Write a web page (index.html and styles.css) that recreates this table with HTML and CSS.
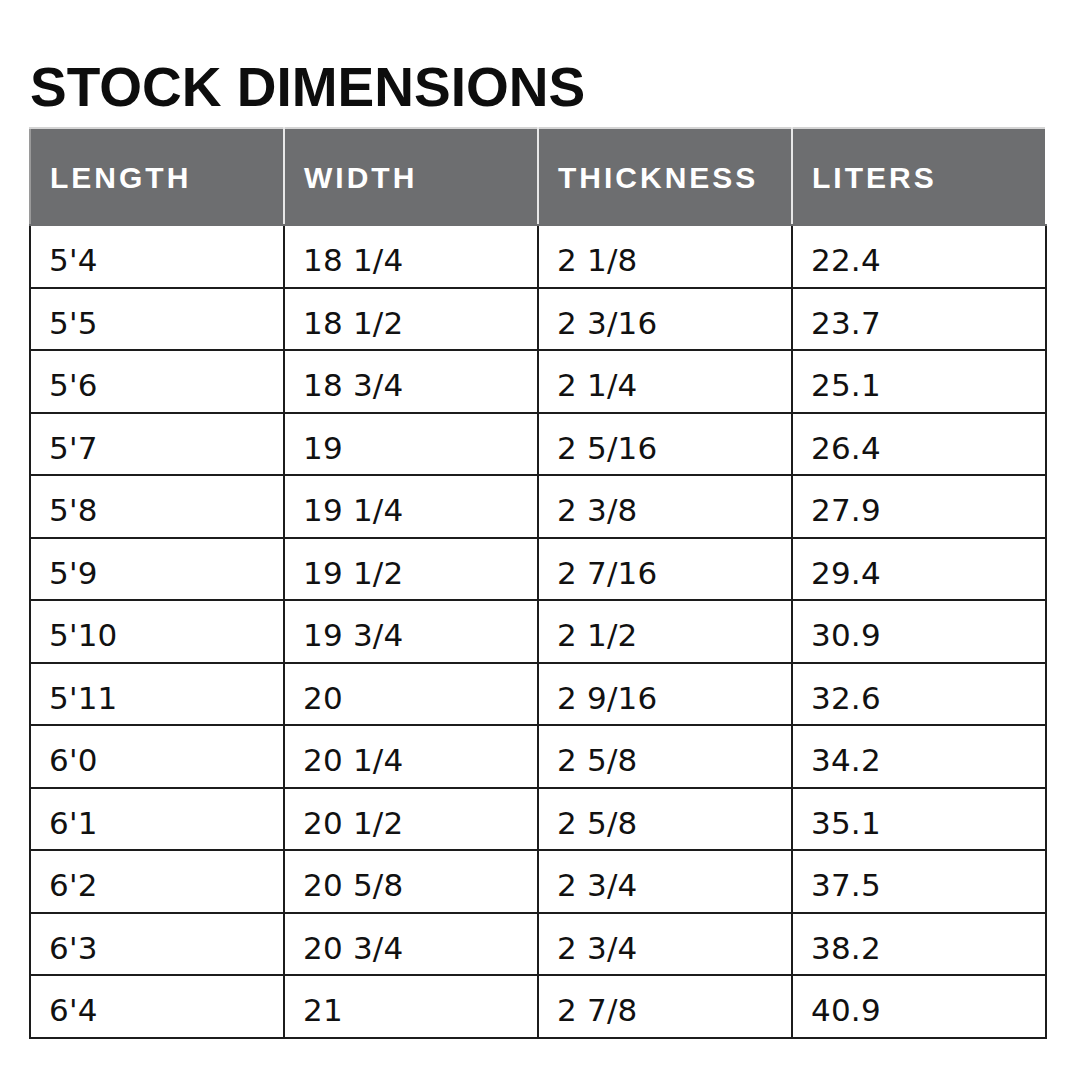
FILE: index.html
```html
<!DOCTYPE html>
<html lang="en">
<head>
<meta charset="utf-8">
<title>Stock Dimensions</title>
<link rel="stylesheet" href="styles.css">
</head>
<body>
<div class="page">
  <h1 class="title">STOCK DIMENSIONS</h1>
  <table class="dims">
    <thead>
      <tr><th>LENGTH</th><th>WIDTH</th><th>THICKNESS</th><th>LITERS</th></tr>
    </thead>
    <tbody>
      <tr><td>5'4</td><td>18 1/4</td><td>2 1/8</td><td>22.4</td></tr>
      <tr><td>5'5</td><td>18 1/2</td><td>2 3/16</td><td>23.7</td></tr>
      <tr><td>5'6</td><td>18 3/4</td><td>2 1/4</td><td>25.1</td></tr>
      <tr><td>5'7</td><td>19</td><td>2 5/16</td><td>26.4</td></tr>
      <tr><td>5'8</td><td>19 1/4</td><td>2 3/8</td><td>27.9</td></tr>
      <tr><td>5'9</td><td>19 1/2</td><td>2 7/16</td><td>29.4</td></tr>
      <tr><td>5'10</td><td>19 3/4</td><td>2 1/2</td><td>30.9</td></tr>
      <tr><td>5'11</td><td>20</td><td>2 9/16</td><td>32.6</td></tr>
      <tr><td>6'0</td><td>20 1/4</td><td>2 5/8</td><td>34.2</td></tr>
      <tr><td>6'1</td><td>20 1/2</td><td>2 5/8</td><td>35.1</td></tr>
      <tr><td>6'2</td><td>20 5/8</td><td>2 3/4</td><td>37.5</td></tr>
      <tr><td>6'3</td><td>20 3/4</td><td>2 3/4</td><td>38.2</td></tr>
      <tr><td>6'4</td><td>21</td><td>2 7/8</td><td>40.9</td></tr>
    </tbody>
  </table>
</div>
</body>
</html>
```

FILE: styles.css
```css
html, body {
  margin: 0;
  padding: 0;
  background: #ffffff;
}

.page {
  padding: 60px 33px 0 29px;
}

.title {
  margin: 0 0 12px 1px;
  font-family: "Liberation Sans", Arial, sans-serif;
  font-weight: 700;
  font-size: 55px;
  line-height: 55px;
  color: #0d0d0d;
  letter-spacing: 0;
}

.dims {
  width: 1018px;
  border-collapse: collapse;
  table-layout: fixed;
}

.dims th {
  height: 93px;
  padding: 2px 0 0 19px;
  text-align: left;
  vertical-align: middle;
  background: #6d6e70;
  color: #ffffff;
  font-family: "Liberation Sans", Arial, sans-serif;
  font-weight: 700;
  font-size: 30px;
  letter-spacing: 3px;
  border-top: 2px solid #d4d4d4;
  border-left: 2px solid #e8e8e8;
  border-right: 2px solid #e8e8e8;
  border-bottom: 2px solid #6d6e70;
}

.dims th:first-child {
  border-left-color: #9a9a9a;
}

.dims th:last-child {
  border-right-color: #ffffff;
}

.dims td {
  height: 52.5px;
  padding: 8px 0 0 18px;
  text-align: left;
  vertical-align: middle;
  font-family: "DejaVu Sans", Verdana, sans-serif;
  font-size: 31px;
  letter-spacing: 0.2px;
  color: #111111;
  border: 2px solid #1c1c1c;
}

.dims tbody tr:first-child td {
  border-top-color: #6d6e70;
}
```
